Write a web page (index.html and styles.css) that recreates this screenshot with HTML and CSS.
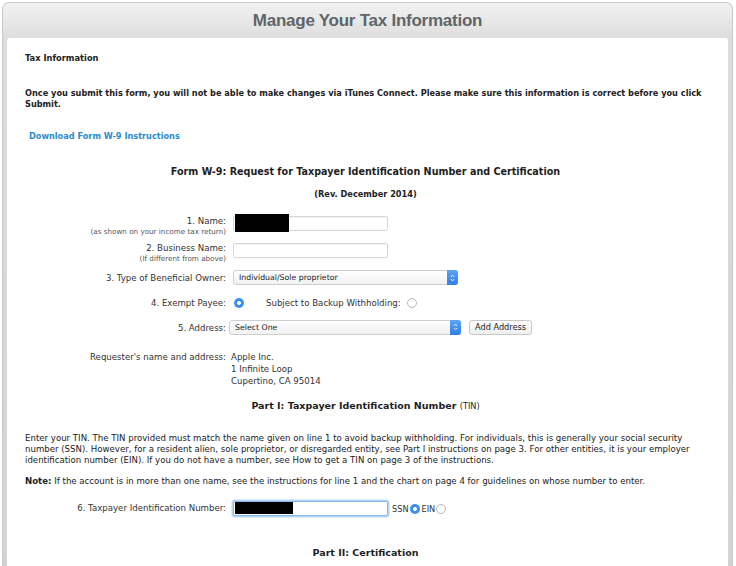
FILE: index.html
```html
<!DOCTYPE html>
<html>
<head>
<meta charset="utf-8">
<link rel="stylesheet" href="styles.css">
</head>
<body>
<div class="panel">
  <div class="header">Manage Your Tax Information</div>
  <div class="card">
    <div class="section-title">Tax Information</div>
    <p class="warn">Once you submit this form, you will not be able to make changes via iTunes Connect. Please make sure this information is correct before you click Submit.</p>
    <a class="dl" href="#">Download Form W-9 Instructions</a>
    <div class="form-title">Form W-9: Request for Taxpayer Identification Number and Certification</div>
    <div class="rev">(Rev. December 2014)</div>

    <div class="rows">
      <div class="row">
        <div class="lbl has-sub">1. Name:<span class="sub">(as shown on your income tax return)</span></div>
        <div class="field"><div class="input"><span class="redact r-name"></span></div></div>
      </div>
      <div class="row">
        <div class="lbl has-sub">2. Business Name:<span class="sub">(If different from above)</span></div>
        <div class="field"><div class="input"></div></div>
      </div>
      <div class="row">
        <div class="lbl">3. Type of Beneficial Owner:</div>
        <div class="field"><div class="select s-owner"><span>Individual/Sole proprietor</span><i class="step"><svg width="5" height="8" viewBox="0 0 5 8"><path d="M0.8 3 L2.5 1.2 L4.2 3 M0.8 5 L2.5 6.8 L4.2 5" fill="none" stroke="#fff" stroke-width="0.9"/></svg></i></div></div>
      </div>
      <div class="row short">
        <div class="lbl">4. Exempt Payee:</div>
        <div class="field radios">
          <span class="radio on"></span>
          <span class="sbw">Subject to Backup Withholding:</span>
          <span class="radio"></span>
        </div>
      </div>
      <div class="row">
        <div class="lbl">5. Address:</div>
        <div class="field addr">
          <div class="select s-addr"><span>Select One</span><i class="step"><svg width="5" height="8" viewBox="0 0 5 8"><path d="M0.8 3 L2.5 1.2 L4.2 3 M0.8 5 L2.5 6.8 L4.2 5" fill="none" stroke="#fff" stroke-width="0.9"/></svg></i></div>
          <span class="btn">Add Address</span>
        </div>
      </div>
      <div class="row req-row">
        <div class="lbl">Requester's name and address:</div>
        <div class="field req">Apple Inc.<br>1 Infinite Loop<br>Cupertino, CA 95014</div>
      </div>
    </div>

    <div class="part">Part I: Taxpayer Identification Number <span class="tin">(TIN)</span></div>
    <p class="body-text">Enter your TIN. The TIN provided must match the name given on line 1 to avoid backup withholding. For individuals, this is generally your social security number (SSN). However, for a resident alien, sole proprietor, or disregarded entity, see Part I instructions on page 3. For other entities, it is your employer identification number (EIN). If you do not have a number, see How to get a TIN on page 3 of the instructions.</p>
    <p class="body-text note"><b>Note:</b> If the account is in more than one name, see the instructions for line 1 and the chart on page 4 for guidelines on whose number to enter.</p>

    <div class="tin-row">
      <div class="tin-lbl">6. Taxpayer Identification Number:</div>
      <div class="input focus"><span class="redact r-tin"></span></div>
      <span class="opt">SSN</span><span class="radio on"></span>
      <span class="opt ein">EIN</span><span class="radio"></span>
    </div>

    <div class="part part2">Part II: Certification</div>
  </div>
</div>
</body>
</html>
```

FILE: styles.css
```css
html, body {
  margin: 0;
  padding: 0;
  background: #ffffff;
  height: 100%;
  overflow: hidden;
}
body {
  font-family: "DejaVu Sans", "Liberation Sans", sans-serif;
  color: #222;
}
.panel {
  margin: 2px 3px 0 2px;
  border-radius: 7px 7px 0 0;
  background: linear-gradient(#f2f2f2 0px, #dddddd 36px, #d3d3d3 100%);
  padding: 0 4px;
  height: calc(100vh - 2px);
  border: 1px solid #c9c9c9;
  border-bottom: none;
  box-sizing: border-box;
  display: flex;
  flex-direction: column;
}
.header {
  height: 35px;
  flex: none;
  display: flex;
  align-items: center;
  justify-content: center;
  font-family: "Liberation Sans", Arial, sans-serif;
  font-weight: bold;
  font-size: 17px;
  color: #5e666a;
  letter-spacing: -0.25px;
}
.card {
  flex: 1;
  min-height: 0;
  overflow: hidden;
  background: #fff;
  border-radius: 3px 3px 0 0;
  padding: 15px 22px 0 18px;
  box-sizing: border-box;
}
.section-title {
  font-weight: bold;
  font-size: 8.3px;
  line-height: 11px;
}
.warn {
  margin: 24px 0 0 0;
  font-weight: bold;
  font-size: 8.2px;
  line-height: 11px;
}
.dl {
  display: block;
  margin: 21px 0 0 4px;
  font-weight: bold;
  font-size: 8.2px;
  line-height: 11px;
  color: #2b8ccc;
  text-decoration: none;
}
.form-title {
  margin-top: 23px;
  text-align: center;
  font-weight: bold;
  font-size: 9.6px;
  line-height: 13px;
  color: #1e1e1e;
}
.rev {
  margin-top: 11px;
  text-align: center;
  font-weight: bold;
  font-size: 8.2px;
  line-height: 11px;
}
.rows {
  margin-top: 10px;
  display: flex;
  flex-direction: column;
}
.row {
  height: 27px;
  display: flex;
  align-items: center;
  font-size: 8.6px;
  color: #333;
}
.row.short { height: 23px; }
.lbl {
  width: 201px;
  text-align: right;
  line-height: 11px;
  flex: none;
  padding-top: 2px;
  box-sizing: border-box;
}
.lbl.has-sub { padding-top: 5px; }
.sub {
  display: block;
  font-size: 7.2px;
  line-height: 9px;
  color: #555;
}
.field {
  margin-left: 7px;
  display: flex;
  align-items: center;
}
.input {
  position: relative;
  width: 153px;
  height: 13px;
  border: 1px solid #d6d6d6;
  border-radius: 2px;
  background: #fff;
  box-shadow: inset 0 1px 1px rgba(0,0,0,0.05);
  flex: none;
}
.redact {
  position: absolute;
  background: #000;
}
.r-name {
  left: 1px;
  top: -3px;
  width: 54px;
  height: 18px;
}
.select {
  position: relative;
  height: 13px;
  border: 1px solid #cfcfcf;
  border-radius: 3px;
  background: linear-gradient(#ffffff, #f1f1f1);
  font-size: 7.8px;
  line-height: 13px;
  padding-left: 5px;
  box-sizing: content-box;
  color: #222;
}
.s-owner { width: 218px; }
.s-addr { width: 225px; margin-left: -4px; }
.step {
  position: absolute;
  right: -1px;
  top: -1px;
  width: 11px;
  height: 15px;
  border-radius: 0 3px 3px 0;
  background: linear-gradient(#5aa4f5, #2f7fe8);
  display: flex;
  align-items: center;
  justify-content: center;
}
.radio {
  display: inline-block;
  width: 10px;
  height: 10px;
  border-radius: 50%;
  border: 1px solid #b9b9b9;
  background: #fff;
  box-sizing: border-box;
  flex: none;
}
.radio.on {
  border: none;
  background: radial-gradient(circle, #fff 0 1.7px, #3c8ef0 2.2px);
}
.radios .radio.on { margin-left: 1px; }
.sbw {
  margin-left: 22px;
  margin-right: 6px;
}
.btn {
  margin-left: 8px;
  height: 13px;
  padding: 0 5px;
  border: 1px solid #c8c8c8;
  border-radius: 3px;
  background: linear-gradient(#ffffff, #eeeeee);
  font-size: 8.2px;
  line-height: 13px;
  color: #222;
}
.addr { padding-bottom: 1px; }
.req-row {
  height: auto;
  margin-top: 10px;
  align-items: flex-start;
}
.req-row .lbl { line-height: 12px; padding-top: 0; }
.req {
  margin-left: 5px;
  line-height: 12px;
  display: block;
}
.part {
  margin-top: 12px;
  text-align: center;
  font-weight: bold;
  font-size: 9.5px;
  line-height: 13px;
  color: #1e1e1e;
}
.tin {
  font-weight: normal;
  font-size: 8.2px;
}
.body-text {
  margin: 20px 0 0 0;
  font-size: 8.6px;
  line-height: 11px;
  color: #222;
}
.note { margin-top: 10px; }
.tin-row {
  margin-top: 14px;
  height: 15px;
  display: flex;
  align-items: center;
  font-size: 8.6px;
  color: #333;
}
.tin-lbl {
  width: 201px;
  text-align: right;
  flex: none;
  padding-bottom: 2px;
}
.input.focus {
  margin-left: 7px;
  width: 153px;
  height: 13px;
  border: 1px solid #88b8ea;
  box-shadow: 0 0 0 1.5px #b7d6f6;
}
.r-tin {
  left: 1px;
  top: 0px;
  width: 58px;
  height: 12px;
}
.opt {
  margin-left: 4px;
  margin-right: 1px;
  font-size: 8.2px;
}
.ein { margin-left: 2px; }
.part2 { margin-top: 30px; }
```
